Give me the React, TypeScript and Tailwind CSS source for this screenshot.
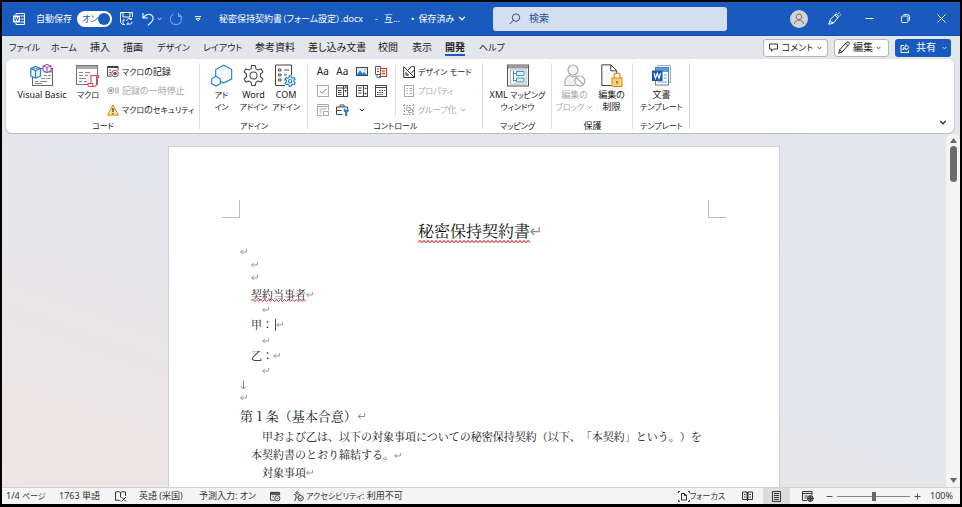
import type { ReactNode } from "react";

type IconProps = { className?: string };

const Chevron = ({ className = "w-[6px] h-[4px]" }: IconProps) => (
  <svg viewBox="0 0 6 4" className={className} fill="none" stroke="currentColor" strokeWidth="1">
    <path d="M0.7 0.7 L3 3 L5.3 0.7" />
  </svg>
);

const WordIcon = () => (
  <svg viewBox="0 0 12 12" className="w-3 h-3" fill="none" stroke="white">
    <path d="M3 2.5V.5h8.5v11H3V9.5M7.5 3h4M7.5 6h4M7.5 9h4" />
    <rect x="0" y="2.5" width="7" height="7" fill="white" stroke="none" />
    <path d="M1.3 4.2l1 3.6 1.2-3.4 1.2 3.4 1-3.6" stroke="#185abd" strokeWidth=".9" />
  </svg>
);

const SaveIcon = () => (
  <svg viewBox="0 0 13 13" className="w-[13px] h-[13px]" fill="none" stroke="white">
    <path d="M5 12.5H2.5l-2-2V.5h12V5M3 .5V5h7V.5M3 12.5V8h2" />
    <path d="M6.5 9a3 3 0 0 1 5-1.7V5.8M12.3 9.8a3 3 0 0 1-5 1.6V13M11.5 7.5H9.8M7.3 11.2H9" />
  </svg>
);

const UndoIcon = () => (
  <svg viewBox="0 0 12 14" className="w-3 h-[14px]" fill="none" stroke="white" strokeWidth="1.1">
    <path d="M1 1v5h5M1.2 5.8C3.5 2.5 7 1.2 9.500 3.200C12 5.300 11.300 8 9.500 9.800L6 13.300" />
  </svg>
);

const RedoIcon = () => (
  <svg viewBox="0 0 14 14" className="w-[14px] h-[14px]" fill="none" stroke="#7da3e0" strokeWidth="1.1">
    <path d="M9.500 0.800V4.500H13M4.500 2A5.600 5.600 0 1 0 9.800 2.300L12 4.300" />
  </svg>
);

const MoreIcon = () => (
  <svg viewBox="0 0 6 6" className="w-[6px] h-[6px]" fill="none" stroke="white">
    <path d="M0 .5h6M1 2.500h4L3 5z" />
  </svg>
);

const SearchIcon = () => (
  <svg viewBox="0 0 12 12" className="w-3 h-3 shrink-0" fill="none" stroke="#2b4f8c">
    <circle cx="7" cy="4.600" r="3.700" />
    <path d="M4.300 7.300L.6 11.200" />
  </svg>
);

const AvatarIcon = () => (
  <svg viewBox="0 0 18 18" className="w-[18px] h-[18px]" fill="none" stroke="#777">
    <circle cx="9" cy="9" r="9" fill="#d2d2d2" stroke="none" />
    <circle cx="9" cy="6.800" r="2.800" />
    <path d="M4.500 14c0-5.200 9-5.200 9 0" />
  </svg>
);

const CoachIcon = () => (
  <svg viewBox="0 0 13 13" className="w-[13px] h-[13px]" fill="none" stroke="white">
    <path d="M.8 12.200l1.700-5L6.800 3l3 2.800-4.600 5.500zM1.500 9.500l4 1M6.800 3l1.700-1 2.300 2.400-1 1.400M7.800 1.200L8.500.4M11.800 3.200l1-.5M10.300 2l1.200-1.500" />
  </svg>
);

const MinIcon = () => (
  <svg viewBox="0 0 9 9" className="w-[9px] h-[9px]" stroke="white"><path d="M.5 4.500h8" /></svg>
);
const RestoreIcon = () => (
  <svg viewBox="0 0 9 9" className="w-[9px] h-[9px]" fill="none" stroke="white">
    <rect x=".5" y="2" width="6.500" height="6.500" rx="1.300" />
    <path d="M2.500.5H6.500a2 2 0 0 1 2 2v4" />
  </svg>
);
const CloseIcon = () => (
  <svg viewBox="0 0 9 9" className="w-[9px] h-[9px]" stroke="white"><path d="M.5.5l8 8M8.500.5l-8 8" /></svg>
);

const CommentIcon = () => (
  <svg viewBox="0 0 9 9" className="w-[9px] h-[9px]" fill="none" stroke="#333">
    <path d="M.5 1h8v5H4.500L2.500 8.300V6h-2z" />
  </svg>
);
const PencilIcon = () => (
  <svg viewBox="0 0 12 13" className="w-3 h-[13px]" fill="none" stroke="#222">
    <path d="M.7 12.300l1-3.600L9 1.200a1.500 1.500 0 0 1 2.100 2.100L3.800 11.200zM7.800 2.500l2.200 2.200M1.700 8.700l2.200 2.400" />
  </svg>
);
const ShareIcon = () => (
  <svg viewBox="0 0 10 10" className="w-[10px] h-[10px]" fill="none" stroke="white">
    <path d="M4 2.500H1v7h7.500V7.500M2.800 7C3 4.500 4.500 3.500 6 3.500V1.500l3 3-3 2.700V5.300C4.500 5.300 3.500 5.800 2.800 7z" />
  </svg>
);

const VbIcon = () => (
  <svg viewBox="0 0 24 23" className="w-6 h-[23px]" fill="none">
    <rect x="2.500" y="4.500" width="20" height="17" fill="#fafafa" stroke="#666" />
    <path d="M14 7.500h8.500" stroke="#888" strokeWidth="2" />
    <path d="M14 11.500h3M18 11.500h3M11 14.500h4M16.500 14.500h4M5 17.500h3M10 17.500h7M5 19.500h7" stroke="#888" />
    <path d="M13.500 1.800L17 .5l4 1.300v5L17 8.500l-4-1.700V1.800zM13 1.800l4 1.700 4-1.700M17 3.500v5" fill="white" stroke="#9b3fb5" />
    <path d="M.8 4.500L5.500 2.500l5 2v7.500l-5 2.200-4.700-2.200zM.8 4.500l4.700 2 5-2M5.500 6.500v7.500" fill="#eef6fd" stroke="#2383cf" strokeWidth="1.200" />
  </svg>
);

const MacroIcon = () => (
  <svg viewBox="0 0 24 23" className="w-6 h-[23px]" fill="none">
    <rect x=".5" y="1.500" width="21" height="19" fill="#fafafa" stroke="#777" />
    <rect x="1" y="2" width="20" height="3" fill="#aaa" />
    <path d="M3 8.500h4M9 8.500h5M3 11.500h4M9 11.500h3M3 14.500h7M3 17.500h3M8 17.500h3" stroke="#888" />
    <path d="M15 11.500h7.500v2H20.500V20c0 2-1 2.500-2.500 2.500h-4.500c-1.500 0-2-1.500-1.500-3h3z" fill="white" stroke="#e0454b" strokeWidth="1.100" />
    <path d="M12 19.500h4.500c0 1.500.3 3 1.500 3M20.500 13.500v-2" stroke="#e0454b" strokeWidth="1.100" />
  </svg>
);

const RecordIcon = () => (
  <svg viewBox="0 0 13 13" className="w-[13px] h-[13px]" fill="none" stroke="#333">
    <path d="M5 11.500H.5V1h11.500v4" />
    <path d="M1 1.800h11" strokeWidth="1.600" />
    <path d="M2.500 5h2M2.500 7.500h2M2.500 9.500h1.500" />
    <circle cx="8.700" cy="8.700" r="3.600" fill="white" stroke="#555" />
    <circle cx="8.700" cy="8.700" r="1.900" fill="#d02a2a" stroke="none" />
  </svg>
);
const PauseIcon = () => (
  <svg viewBox="0 0 13 9" className="w-[13px] h-[9px]" fill="none" stroke="#999">
    <circle cx="4" cy="4.500" r="3.300" />
    <circle cx="4" cy="4.500" r="1.300" fill="#999" />
    <path d="M9.500 1v7M12 1v7" />
  </svg>
);
const WarnIcon = () => (
  <svg viewBox="0 0 12 12" className="w-3 h-3" fill="none">
    <path d="M6 .8L11.400 11.200H.6z" fill="#ffdf9b" stroke="#d68a1c" />
    <path d="M6 4v4M6 9v1.200" stroke="#222" strokeWidth="1.100" />
  </svg>
);

const AddinIcon = () => (
  <svg viewBox="0 0 22 23" className="w-[22px] h-[23px]" fill="none" stroke="#1f7fcc" strokeWidth="1.100">
    <path d="M12.700 1.200l8 4.300v9.300l-8 4.300-8-4.300V5.500z" fill="#f8fbfe" />
    <path d="M5 12.200l4.300 2.500v4.900L5 22.100.7 19.600v-4.900z" fill="white" />
  </svg>
);

const gearPath =
  "M9.300 1.500h3.400l.6 3 2.100 1.200 2.900-1 1.700 2.900-2.300 2v2.800l2.300 2-1.700 2.900-2.900-1-2.100 1.200-.6 3H9.300l-.6-3-2.100-1.200-2.900 1L2 14.400l2.300-2V9.600L2 7.600l1.700-2.900 2.900 1 2.100-1.200z";

const GearIcon = () => (
  <svg viewBox="0 0 22 22" className="w-[23px] h-[23px]" fill="none" stroke="#444">
    <path d={gearPath} />
    <circle cx="11" cy="11" r="3.400" />
  </svg>
);

const ComIcon = () => (
  <svg viewBox="0 0 22 23" className="w-[22px] h-[23px]" fill="none">
    <path d="M10 21.500H.5V1h16v10" stroke="#444" fill="#fafafa" />
    <path d="M3.500 5h2.500v2H3.500zM3.500 10h2.500v2H3.500zM3.500 15h2.500v2H3.500zM9 6h5M9 11h3M9 16h1" stroke="#555" />
    <g transform="translate(9 11) scale(.56)" stroke="#1f7fcc" strokeWidth="2" fill="white">
      <path d={gearPath} />
      <circle cx="11" cy="11" r="3" />
    </g>
  </svg>
);

const PictureIcon = () => (
  <svg viewBox="0 0 12 9" className="w-3 h-[9px]" fill="none">
    <rect x=".5" y=".5" width="11" height="8" fill="#dcecfb" stroke="#444" />
    <path d="M1 7.500l3-4 2.500 3L8 5l3 3H1z" fill="#1f7fcc" />
    <circle cx="9" cy="2.500" r=".8" fill="#e28a1c" />
  </svg>
);
const BlockIcon = () => (
  <svg viewBox="0 0 12 12" className="w-3 h-3" fill="none" stroke="#555">
    <path d="M.5.5h5v8h-5zM2 3h2M2 5.500h2" />
    <rect x="5.500" y="2.500" width="6" height="8" fill="#fbe4e2" stroke="#b8403a" />
    <path d="M7 5h3M7 7.500h3" stroke="#b8403a" />
    <path d="M2 9v2.500h3M4 10l1.500 1.500L4 13" stroke="#1f7fcc" />
  </svg>
);
const CheckIcon = () => (
  <svg viewBox="0 0 12 12" className="w-3 h-3" fill="none" stroke="#aaa">
    <rect x=".5" y=".5" width="11" height="11" fill="#fafafa" />
    <path d="M3 6l2.200 2.300L9.200 4" stroke="#888" />
  </svg>
);
const ComboIcon = () => (
  <svg viewBox="0 0 12 12" className="w-3 h-3" fill="none" stroke="#444">
    <rect x=".5" y=".5" width="11" height="11" />
    <path d="M.5 3h11M7.500 1v10M2 5.500h3.500M2 7.500h3.500M2 9.500h3.500M8.800 5.500h1.500M9 1.700h1.500" />
    <path d="M8.500 5.500h2.500L9.700 7z" fill="#333" stroke="none" />
  </svg>
);
const ListIcon = () => (
  <svg viewBox="0 0 12 12" className="w-3 h-3" fill="none" stroke="#444">
    <rect x=".5" y=".5" width="11" height="11" />
    <path d="M7.500 1v10M2 3h3.500M2 5.500h3.500M2 8h3.500" />
    <path d="M8.300 4h2.600L9.600 2.300zM8.300 8h2.600L9.600 9.700z" fill="#333" stroke="none" />
  </svg>
);
const DateIcon = () => (
  <svg viewBox="0 0 12 12" className="w-3 h-3" fill="none" stroke="#444">
    <rect x=".5" y=".5" width="11" height="11" />
    <path d="M.5 2.500h11M4 5.500h1.500M6.500 5.500H8M9 5.500h1M2 7.500h1.500M4.300 7.500h1.500M6.500 7.500H8M2 9.500h1.500M4.300 9.500h1.500M6.500 9.500H8" />
  </svg>
);
const RepeatIcon = () => (
  <svg viewBox="0 0 12 12" className="w-3 h-3" fill="none" stroke="#aaa">
    <path d="M5 11.500H.5V.5h11V6M.5 2.500h11M2.500 5h7M2.500 7h2.500M2.500 9h2" />
    <rect x="6.500" y="7.500" width="5" height="4" />
  </svg>
);
const ToolboxIcon = () => (
  <svg viewBox="0 0 13 12" className="w-[13px] h-3" fill="none" stroke="#444">
    <path d="M4 3V1h4v2M6.500 10.500H.5v-7.500h11v2M.5 6.500h5" />
    <path d="M8.500 4.800L8 7l1.500 1.200V12h1.200V8.200L12.300 7l-.6-2.200-.8 1.500h-1.400z" fill="#1f7fcc" stroke="#1f7fcc" />
  </svg>
);
const DesignIcon = () => (
  <svg viewBox="0 0 12 12" className="w-3 h-3" fill="none" stroke="#333">
    <path d="M.7.7v10.800h10.800zM3 6.500v2.700h2.600z" />
    <path d="M4.500 4.500L8.500.7h3v3L8 7.500M11.500 3.500v8" />
  </svg>
);
const PropIcon = () => (
  <svg viewBox="0 0 12 12" className="w-3 h-3" fill="none" stroke="#aaa">
    <rect x="1.500" y=".5" width="9" height="11" />
    <path d="M3.500 3.500h1.500M6.500 3.500h2.500M3.500 6h1.500M6.500 6h2.500M3.500 8.500h1.500M6.500 8.500h2.500" />
  </svg>
);
const GroupIcon = () => (
  <svg viewBox="0 0 12 12" className="w-3 h-3" fill="none" stroke="#aaa">
    <path d="M0 1.500h12M0 10.500h12M1.500 0v12M10.500 0v12" strokeDasharray="2 1" />
    <path d="M3.500 3.500h4v3h-4zM5.500 6.500v2h4v-3.500h-2" />
  </svg>
);
const XmlIcon = () => (
  <svg viewBox="0 0 22 22" className="w-[22px] h-[23px]" fill="none">
    <rect x=".5" y=".5" width="21" height="21" fill="#f3f3f3" stroke="#555" />
    <rect x="1" y="1" width="20" height="3" fill="#999" />
    <rect x="3.500" y="5.500" width="15.500" height="14" fill="white" stroke="#bbb" />
    <path d="M6.500 6.500v10.500M6.500 9h3M6.500 16h3M9.500 7h7.500v4H9.500zM9.500 13.500h7.500v4H9.500z" fill="#e3f1fb" stroke="#3a93cf" />
  </svg>
);
const BlockAuthorIcon = () => (
  <svg viewBox="0 0 22 23" className="w-[22px] h-[23px]" fill="none" stroke="#aaa" strokeWidth="1.200">
    <circle cx="9" cy="6" r="5" fill="#f3f3f3" />
    <path d="M11 21.500H1v-4c0-3 1.500-5 4.500-6 2 1.500 5 1.500 7 0" fill="#f3f3f3" />
    <circle cx="15.800" cy="17" r="5" fill="white" />
    <path d="M12.300 13.500l7 7" />
  </svg>
);
const RestrictIcon = () => (
  <svg viewBox="0 0 22 23" className="w-[22px] h-[23px]" fill="none">
    <path d="M10.500 21.500H.8V.8h9l6 6V10M9.800.8v6h6" stroke="#444" fill="#fafafa" />
    <path d="M13 14.500v-2.500c0-4 6-4 6 0v2.500" stroke="#d68a1c" strokeWidth="1.200" />
    <rect x="11" y="14" width="10" height="8.500" fill="#fbcf7e" stroke="#d68a1c" />
    <path d="M16 17v2.500" stroke="#8a5a10" strokeWidth="1.400" />
  </svg>
);
const TemplateIcon = () => (
  <svg viewBox="0 0 20 22" className="w-5 h-[23px]" fill="none">
    <path d="M5.500 2.500v-1.500h13v17h-2" stroke="#8fb6dd" fill="#eaf3fb" />
    <rect x="3.500" y="3" width="13" height="17.500" fill="white" stroke="#777" />
    <path d="M4 3.500h12v4H4z" fill="#4aa3e6" />
    <path d="M12 10.500h3M12 13.500h3M6 17.500h9" stroke="#4aa3e6" />
    <rect x="0" y="6" width="10.500" height="10.500" fill="#1757b0" />
    <path d="M2 8.500l1.500 5.200 1.800-5 1.700 5 1.600-5.200" stroke="white" strokeWidth="1.200" />
  </svg>
);

/* Paragraph mark shown at the end of each paragraph */
const Ret = ({ className = "w-[7px] h-[7px]" }: IconProps) => (
  <svg viewBox="0 0 8 8" className={className} fill="none" stroke="#8a8a8a" strokeWidth="1">
    <path d="M7.300 1v3.500H.8M3.300 2L.8 4.500l2.500 2.500" />
  </svg>
);
const Down = () => (
  <svg viewBox="0 0 7 10" className="w-[7px] h-[10px]" fill="none" stroke="#8a8a8a">
    <path d="M3.500.5v8.500M1 6.500L3.500 9 6 6.500" />
  </svg>
);

/* Interface text: katakana is set one size below the kanji and Latin around it */
function Label({ text, kana = "text-[8px]" }: { text: string; kana?: string }) {
  return (
    <span className="whitespace-pre">
      {text.split(/([ァ-ヶー]+)/).map((part, i) =>
        i % 2 ? <span key={i} className={kana}>{part}</span> : part
      )}
    </span>
  );
}

const tabs: [string, string][] = [
  ["ファイル", "w-[42px]"],
  ["ホーム", "w-[39px]"],
  ["挿入", "w-[33px]"],
  ["描画", "w-[34px]"],
  ["デザイン", "w-[46px]"],
  ["レイアウト", "w-[52px]"],
  ["参考資料", "w-[53px]"],
  ["差し込み文書", "w-[70px]"],
  ["校閲", "w-[34px]"],
  ["表示", "w-[33px]"],
  ["開発", "w-[34px]"],
  ["ヘルプ", "w-[34px]"],
];

function Group({ label, width, children }: { label: string; width: string; children: ReactNode }) {
  return (
    <section aria-label={label} className={`${width} shrink-0 flex flex-col pt-[5px] relative`}>
      <div className="flex-1 flex justify-center">{children}</div>
      <div className="h-3 leading-3 mb-px text-center whitespace-nowrap"><Label text={label} /></div>
      <div className="absolute right-0 inset-y-1 w-px bg-[#dcdcdc]" />
    </section>
  );
}

type BigProps = { icon: ReactNode; lines: string[]; width: string; muted?: boolean; menu?: boolean };

function Big({ icon, lines, width, muted, menu }: BigProps) {
  return (
    <button type="button" disabled={muted} className={`${width} shrink-0 flex flex-col items-center ${muted ? "text-[#aaaaaa]" : ""}`}>
      {icon}
      <span className="pt-0.5 flex flex-col items-center leading-3 whitespace-nowrap">
        {lines.map((l, i) => (
          <span key={l} className="flex items-center gap-[3px]">
            <Label text={l} />
            {menu && i === lines.length - 1 && <Chevron />}
          </span>
        ))}
      </span>
    </button>
  );
}

type SmallProps = { icon: ReactNode; label: string; muted?: boolean; menu?: boolean };

function Small({ icon, label, muted, menu }: SmallProps) {
  return (
    <button type="button" disabled={muted} className={`h-[19px] flex items-center gap-[3px] whitespace-nowrap ${muted ? "text-[#aaaaaa]" : ""}`}>
      <span className="w-3 flex justify-center">{icon}</span>
      <Label text={label} />
      {menu && <Chevron />}
    </button>
  );
}

const controls: [string, ReactNode][] = [
  ["リッチ テキスト", "Aa"],
  ["テキスト", "Aa"],
  ["画像", <PictureIcon />],
  ["文書パーツ", <BlockIcon />],
  ["チェック ボックス", <CheckIcon />],
  ["コンボ ボックス", <ComboIcon />],
  ["ドロップダウン", <ListIcon />],
  ["日付", <DateIcon />],
  ["繰り返し", <RepeatIcon />],
  ["以前のツール", <ToolboxIcon />],
  ["ツールの一覧", <Chevron />],
];

function TitleBar() {
  return (
    <header className="h-[34px] shrink-0 bg-[#185abd] text-white flex items-center pl-[11px] pr-[14px] border-b border-[#1450a8]">
      <div className="w-[480px] shrink-0 flex items-center whitespace-nowrap">
        <WordIcon />
        <label className="ml-[11px] flex items-center gap-[5px]">
          自動保存
          <span className="w-[35px] h-4 rounded-full bg-white text-[#185abd] flex items-center justify-between pl-[5px] pr-[2px]">
            オン
            <input type="checkbox" defaultChecked className="appearance-none w-3 h-3 rounded-full bg-[#185abd]" />
          </span>
        </label>
        <button type="button" aria-label="保存" className="ml-2"><SaveIcon /></button>
        <button type="button" aria-label="元に戻す" className="ml-[9px] flex items-center gap-[3px]"><UndoIcon /><Chevron className="w-[5px] h-[4px]" /></button>
        <button type="button" aria-label="やり直し" className="ml-[7px]"><RedoIcon /></button>
        <button type="button" aria-label="カスタマイズ" className="ml-3"><MoreIcon /></button>
        <span className="ml-[18px] w-[156px]">秘密保持契約書（フォーム設定）.docx</span>
        <span className="w-[36px] flex gap-[6px]"><span>-</span><span>互…</span></span>
        <button type="button" className="flex items-center gap-1">
          <span>•</span>保存済み<Chevron className="w-2 h-[5px]" />
        </button>
      </div>
      <label className="w-[234px] h-6 rounded-[3px] bg-[#d3def0] flex items-center pl-4 gap-2">
        <SearchIcon />
        <input type="search" aria-label="検索" placeholder="検索" className="bg-transparent flex-1 min-w-0 text-[10px] outline-none text-[#1c3f7c] placeholder:text-[#2b4f8c]" />
      </label>
      <div className="ml-auto flex items-center">
        <button type="button" aria-label="アカウント"><AvatarIcon /></button>
        <button type="button" aria-label="Coach" className="ml-5"><CoachIcon /></button>
        <button type="button" aria-label="最小化" className="ml-6"><MinIcon /></button>
        <button type="button" aria-label="元のサイズ" className="ml-[27px]"><RestoreIcon /></button>
        <button type="button" aria-label="閉じる" className="ml-[27px]"><CloseIcon /></button>
      </div>
    </header>
  );
}

function TabRow() {
  return (
    <div className="h-[23px] shrink-0 flex items-center pl-[7px] pr-[9px] text-[10px]">
      <nav className="flex whitespace-nowrap">
        {tabs.map(([name, w]) => (
          <a key={name} href="#" className={`${w} shrink-0`}>
            <span className={`inline-block h-[17px] leading-4 ${name === "開発" ? "font-bold border-b-2 border-[#185abd]" : ""}`}>
              <Label text={name} kana="text-[9px]" />
            </span>
          </a>
        ))}
      </nav>
      <div className="ml-auto flex gap-[6px] whitespace-nowrap">
        <button type="button" className="w-[65px] h-[18px] rounded-[3px] bg-white border border-[#b5b5b5] flex items-center justify-between px-[5px]">
          <CommentIcon /><Label text="コメント" kana="text-[9px]" /><Chevron className="w-[5px] h-[4px]" />
        </button>
        <button type="button" className="w-[55px] h-[18px] rounded-[3px] bg-white border border-[#b5b5b5] flex items-center justify-between pl-[3px] pr-[7px]">
          <PencilIcon />編集<Chevron className="w-[5px] h-[4px]" />
        </button>
        <button type="button" className="w-[56px] h-[18px] rounded-[3px] bg-[#185abd] text-white flex items-center justify-between pl-[5px] pr-1">
          <ShareIcon />共有<Chevron className="w-[5px] h-[4px]" />
        </button>
      </div>
    </div>
  );
}

function Ribbon() {
  return (
    <div className="h-[74px] mb-px shrink-0 ml-1 mr-[6px] bg-white rounded-md shadow-[0_1px_2px_rgba(0,0,0,0.25)] flex">
      <Group label="コード" width="w-[194px]">
        <div className="flex w-full pl-1">
          <Big width="w-[64px]" icon={<VbIcon />} lines={["Visual Basic"]} />
          <Big width="w-[28px]" icon={<MacroIcon />} lines={["マクロ"]} />
          <div className="flex flex-col pl-[5px] -mt-0.5">
            <Small icon={<RecordIcon />} label="マクロの記録" />
            <Small icon={<PauseIcon />} label="記録の一時停止" muted />
            <Small icon={<WarnIcon />} label="マクロのセキュリティ" />
          </div>
        </div>
      </Group>
      <Group label="アドイン" width="w-[108px]">
        <Big width="w-[32px]" icon={<AddinIcon />} lines={["アド", "イン"]} />
        <Big width="w-[32px]" icon={<GearIcon />} lines={["Word", "アドイン"]} />
        <Big width="w-[33px]" icon={<ComIcon />} lines={["COM", "アドイン"]} />
      </Group>
      <Group label="コントロール" width="w-[175px]">
        <div className="flex w-full pl-[5px] -mt-0.5">
          <div className="w-[78px] h-[57px] grid grid-cols-4 grid-rows-3 justify-items-center items-center text-[10px]">
            {controls.map(([name, icon]) => (
              <button type="button" key={name} aria-label={name}>{icon}</button>
            ))}
          </div>
          <div className="ml-1 h-[50px] mt-1 w-px bg-[#dcdcdc]" />
          <div className="pl-[7px] flex flex-col">
            <Small icon={<DesignIcon />} label="デザイン モード" />
            <Small icon={<PropIcon />} label="プロパティ" muted />
            <Small icon={<GroupIcon />} label="グループ化" muted menu />
          </div>
        </div>
      </Group>
      <Group label="マッピング" width="w-[69px]">
        <Big width="w-[64px]" icon={<XmlIcon />} lines={["XML マッピング", "ウィンドウ"]} />
      </Group>
      <Group label="保護" width="w-[81px]">
        <Big width="w-[38px]" icon={<BlockAuthorIcon />} lines={["編集の", "ブロック"]} muted menu />
        <Big width="w-[36px]" icon={<RestrictIcon />} lines={["編集の", "制限"]} />
      </Group>
      <Group label="テンプレート" width="w-[57px]">
        <Big width="w-[50px]" icon={<TemplateIcon />} lines={["文書", "テンプレート"]} />
      </Group>
      <button type="button" aria-label="リボンを折りたたむ" className="ml-auto self-end mb-2 mr-[7px]"><Chevron className="w-2 h-[5px]" /></button>
    </div>
  );
}

/* Word flagged by the spell checker, with a fine red zigzag under it */
function Flagged({ children, width, leading }: { children: string; width: number; leading: string }) {
  const points = Array.from({ length: width / 2 + 1 }, (_, i) => `${i * 2},${i % 2 ? 0.5 : 2.5}`).join(" ");
  return (
    <span className={`relative ${leading}`}>
      {children}
      <svg viewBox={`0 0 ${width} 3`} preserveAspectRatio="none" className="absolute left-0 bottom-0 w-full h-[3px]" fill="none" stroke="#cc2f38">
        <polyline points={points} />
      </svg>
    </span>
  );
}

function Document() {
  return (
    <article className="w-[612px] shrink-0 mt-3 bg-white border border-b-0 border-[#cfd0d4] pt-[53px] text-[11px] text-[#111] [text-spacing-trim:space-all] font-['Noto_Serif_CJK_JP','Noto_Serif_JP','Liberation_Serif','Noto_Sans_CJK_JP',serif]">
      <div className="flex justify-between px-[53px] h-[18px]">
        <div className="w-[18px] border-r border-b border-[#bdbdbd]" />
        <div className="w-[18px] border-l border-b border-[#bdbdbd]" />
      </div>
      <div className="pl-[71px] pr-[61px]">
        <h1 className="h-[26px] flex items-center justify-center text-[16px]">
          <Flagged width={112} leading="leading-6">秘密保持契約書</Flagged><Ret className="w-[10px] h-[10px]" />
        </h1>
        <p className="mt-px h-[13px] flex items-center"><Ret /></p>
        <p className="h-[13px] flex items-center pl-[11px]"><Ret /></p>
        <p className="h-[13px] flex items-center pl-[11px]"><Ret /></p>
        <p className="mt-0.5 h-4 flex items-center pl-[11px]"><Flagged width={56} leading="leading-4">契約当事者</Flagged><Ret /></p>
        <p className="h-[15px] flex items-center pl-[22px]"><Ret /></p>
        <p className="h-[15px] flex items-center pl-[11px]">甲：<span className="w-px h-3 ml-0.5 bg-[#555]" /><Ret /></p>
        <p className="h-4 flex items-center pl-[22px]"><Ret /></p>
        <p className="h-[15px] flex items-center pl-[11px]">乙：<Ret /></p>
        <p className="h-[15px] flex items-center pl-[22px]"><Ret /></p>
        <p className="h-[13px] flex items-center"><Down /></p>
        <p className="h-[13px] flex items-center"><Ret /></p>
        <h2 className="h-[23px] flex items-center text-[13px]">第 1 条（基本合意）<Ret className="w-[9px] h-[8px]" /></h2>
        <p className="leading-[18px] pl-[11px] pr-2 indent-[11px]">
          甲および乙は、以下の対象事項についての秘密保持契約（以下、「本契約」という。）を本契約書のとおり締結する。<span className="inline-block indent-0"><Ret /></span>
        </p>
        <p className="h-[18px] flex items-center pl-[22px]">対象事項<Ret /></p>
        <p className="h-[18px] flex items-center"><Ret /></p>
      </div>
    </article>
  );
}

function StatusBar() {
  return (
    <footer className="h-[17px] shrink-0 bg-[#f4f4f4] border-t border-[#d0d0d0] flex items-center pl-1 pr-1 whitespace-nowrap text-[#333]">
      <span className="w-[53px]"><Label text="1/4 ページ" /></span>
      <span className="w-[56px]">1763 単語</span>
      <svg viewBox="0 0 12 11" className="w-3 h-[11px] mr-3" fill="none" stroke="#333">
        <path d="M5.500 1.500C4 .5 2 .5.5 1v8.500c1.500-.5 3.500-.5 5 .5M5.500 1.500v5M5.500 1.500C7 .5 9 .5 10.500 1v4M6.500 6l4.500 4.500M11 6l-4.500 4.500" />
      </svg>
      <span className="w-[60px]">英語 (米国)</span>
      <span className="w-[71px]">予測入力: オン</span>
      <svg viewBox="0 0 12 11" className="w-[11px] h-[11px] mr-3" fill="none" stroke="#333">
        <path d="M5 9.500H.5V1h10v3M.5 3.500h10M2.500 6h2" /><path d="M1 1.800h9" strokeWidth="1.500" />
        <circle cx="8" cy="7.500" r="2.800" /><path d="M7 7.500h2" />
      </svg>
      <svg viewBox="0 0 12 12" className="w-[11px] h-[11px] mr-0.5" fill="none" stroke="#333">
        <circle cx="4.500" cy="2" r="1.300" />
        <path d="M.8 3.500l2.500 1v2.500L1.800 11M8.300 3.500l-2.500 1M3.500 7.500l1.500-1" />
        <circle cx="8.300" cy="7.800" r="2.900" /><path d="M6.800 7.800l1.100 1.200 2-2.200" />
      </svg>
      <Label text="アクセシビリティ: 利用不可" />
      <div className="ml-auto flex items-center h-full">
        <button type="button" className="flex items-center">
          <svg viewBox="0 0 12 11" className="w-3 h-[11px]" fill="none" stroke="#333">
            <path d="M2 .5H.5V2M10 .5h1.500V2M2 10.500H.5V9M10 10.500h1.500V9M3.500 2.500h3l2 2v4.500h-5zM6.500 2.500v2h2" />
          </svg>
          <Label text="フォーカス" />
        </button>
        <button type="button" aria-label="閲覧モード" className="ml-[17px]">
          <svg viewBox="0 0 11 10" className="w-[11px] h-[10px]" fill="none" stroke="#333">
            <path d="M.5 1h4.500v7.500H.5zM6 1h4.500v7.500H6zM5.500 1v9M2 3.500h1.500M2 6h1.500M7.500 3.500H9M7.500 6H9" />
          </svg>
        </button>
        <button type="button" aria-label="印刷レイアウト" className="ml-[10px] w-[27px] h-full bg-[#dcdcdc] flex items-center justify-center">
          <svg viewBox="0 0 9 11" className="w-[9px] h-[11px]" fill="none" stroke="#333">
            <path d="M.5.5h8v10h-8zM2 2.500h5M2 4.500h5M2 6.500h5M2 8.500h5" />
          </svg>
        </button>
        <button type="button" aria-label="Web レイアウト" className="ml-3">
          <svg viewBox="0 0 12 11" className="w-3 h-[11px]" fill="none" stroke="#333">
            <path d="M5 9.500H.5V.5h9.500V4M.5 2.500h9.500M2.500 5h3M2.500 7h2" />
            <circle cx="8.300" cy="7.500" r="2.900" fill="#888" /><path d="M5.500 7.500h6M8.300 4.500v6" />
          </svg>
        </button>
        <button type="button" aria-label="縮小" className="ml-3 w-[7px]">
          <svg viewBox="0 0 7 7" className="w-[7px] h-[7px]" stroke="#555"><path d="M.5 3.500h6" /></svg>
        </button>
        <input
          type="range" min="0" max="100" defaultValue="50" aria-label="ズーム"
          className="appearance-none w-[73px] h-[11px] mx-1 bg-[linear-gradient(#888,#888)] bg-[length:100%_1px] bg-center bg-no-repeat [&::-webkit-slider-thumb]:appearance-none [&::-webkit-slider-thumb]:w-1 [&::-webkit-slider-thumb]:h-[9px] [&::-webkit-slider-thumb]:bg-[#666]"
        />
        <button type="button" aria-label="拡大" className="w-[7px] mr-[9px]">
          <svg viewBox="0 0 7 7" className="w-[7px] h-[7px]" stroke="#555"><path d="M.5 3.500h6M3.500.5v6" /></svg>
        </button>
        <span className="w-[26px]">100%</span>
      </div>
    </footer>
  );
}

export default function App() {
  return (
    <div className="h-screen overflow-hidden bg-black pt-[2px] px-[2px] pb-[3px] flex flex-col text-[9px] text-[#222] [font-feature-settings:'palt'] font-['Noto_Sans','Noto_Sans_CJK_JP',sans-serif]">
      <div className="flex-1 min-h-0 flex flex-col bg-[#e3e7ec]">
        <TitleBar />
        <TabRow />
        <Ribbon />
        <main className="flex-1 min-h-0 flex overflow-hidden bg-[linear-gradient(200deg,#e3e8ee_0%,#e5e6eb_50%,#efe6e5_100%)]">
          <div className="flex-1 min-w-0 flex justify-center overflow-hidden [font-feature-settings:normal]">
            <Document />
          </div>
          <div className="w-[14px] shrink-0 rounded-t-md bg-[#f4f4f5] flex flex-col items-center pt-1 pb-1">
            <svg viewBox="0 0 7 5" className="w-[7px] h-[5px]"><path d="M3.500 0L7 5H0z" fill="#666" /></svg>
            <div className="mt-[3px] w-[7px] h-9 rounded-full bg-[#6b6b6b]" />
            <svg viewBox="0 0 7 5" className="mt-auto w-[7px] h-[5px]"><path d="M3.500 5L7 0H0z" fill="#666" /></svg>
          </div>
        </main>
        <StatusBar />
      </div>
    </div>
  );
}
